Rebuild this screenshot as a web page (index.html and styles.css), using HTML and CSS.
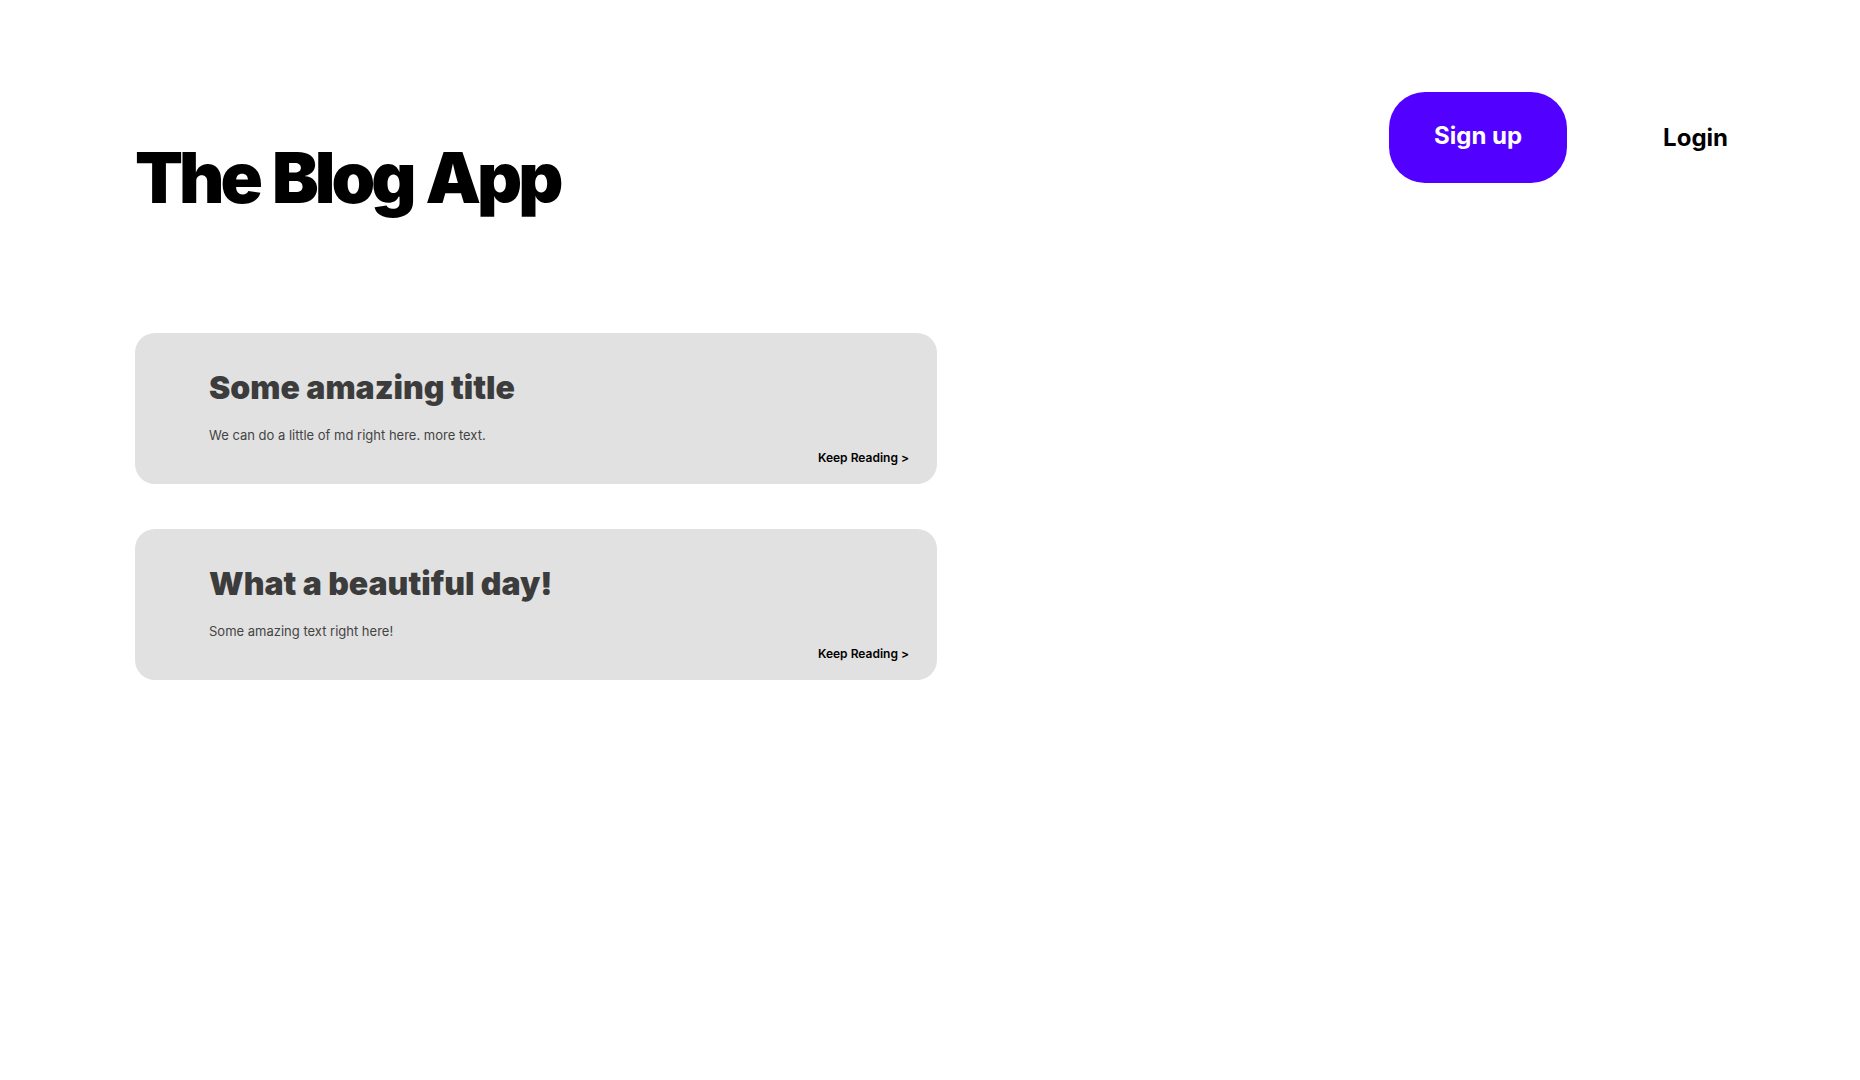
FILE: index.html
```html
<!DOCTYPE html>
<html lang="en">
<head>
<meta charset="utf-8">
<title>The Blog App</title>
<link rel="stylesheet" href="styles.css">
</head>
<body>
<div class="page">
  <header class="header">
    <h1 class="brand">The Blog App</h1>
    <nav class="nav">
      <button class="btn-signup">Sign up</button>
      <button class="btn-login">Login</button>
    </nav>
  </header>
  <main class="posts">
    <article class="card">
      <h2 class="card-title">Some amazing title</h2>
      <p class="card-text">We can do a little of md right here. more text.</p>
      <a class="card-link" href="#">Keep Reading &gt;</a>
    </article>
    <article class="card">
      <h2 class="card-title">What a beautiful day!</h2>
      <p class="card-text">Some amazing text right here!</p>
      <a class="card-link" href="#">Keep Reading &gt;</a>
    </article>
  </main>
</div>
</body>
</html>
```
FILE: styles.css
```css
* { box-sizing: border-box; }
html, body {
  margin: 0;
  padding: 0;
  background: #ffffff;
  font-family: Inter, "Noto Sans", "Liberation Sans", sans-serif;
}
.page {
  padding: 92px 132px 0 135px;
}
.header {
  display: flex;
  justify-content: space-between;
  align-items: flex-start;
}
.brand {
  margin: 43px 0 0 0;
  font-size: 70px;
  font-weight: 900;
  letter-spacing: -4px;
  word-spacing: 3px;
  line-height: normal;
  color: #000;
}
.nav {
  display: flex;
  align-items: center;
  gap: 96px;
}
.btn-signup {
  width: 178px;
  height: 91px;
  border: none;
  border-radius: 36px;
  background: #5200ff;
  color: #fff;
  font-family: inherit;
  font-size: 24px;
  font-weight: 700;
  padding: 0 0 4px 0;
  cursor: pointer;
}
.btn-login {
  border: none;
  background: none;
  padding: 0;
  color: #000;
  font-family: inherit;
  font-size: 24px;
  font-weight: 700;
  cursor: pointer;
}
.posts {
  margin-top: 113px;
  display: flex;
  flex-direction: column;
  gap: 45px;
  width: 802px;
}
.card {
  background: #e1e1e1;
  border-radius: 20px;
  padding: 35px 28px 19px 74px;
  display: flex;
  flex-direction: column;
  height: 151px;
}
.card-title {
  margin: 0;
  font-size: 32px;
  font-weight: 900;
  line-height: normal;
  color: #3c3c3c;
  letter-spacing: 0;
}
.card-text {
  margin: 20px 0 0 0;
  font-size: 13px;
  line-height: normal;
  color: #444;
}
.card-link {
  margin-top: 7px;
  align-self: flex-end;
  font-size: 12px;
  font-weight: 600;
  color: #000;
  text-decoration: none;
}
```
